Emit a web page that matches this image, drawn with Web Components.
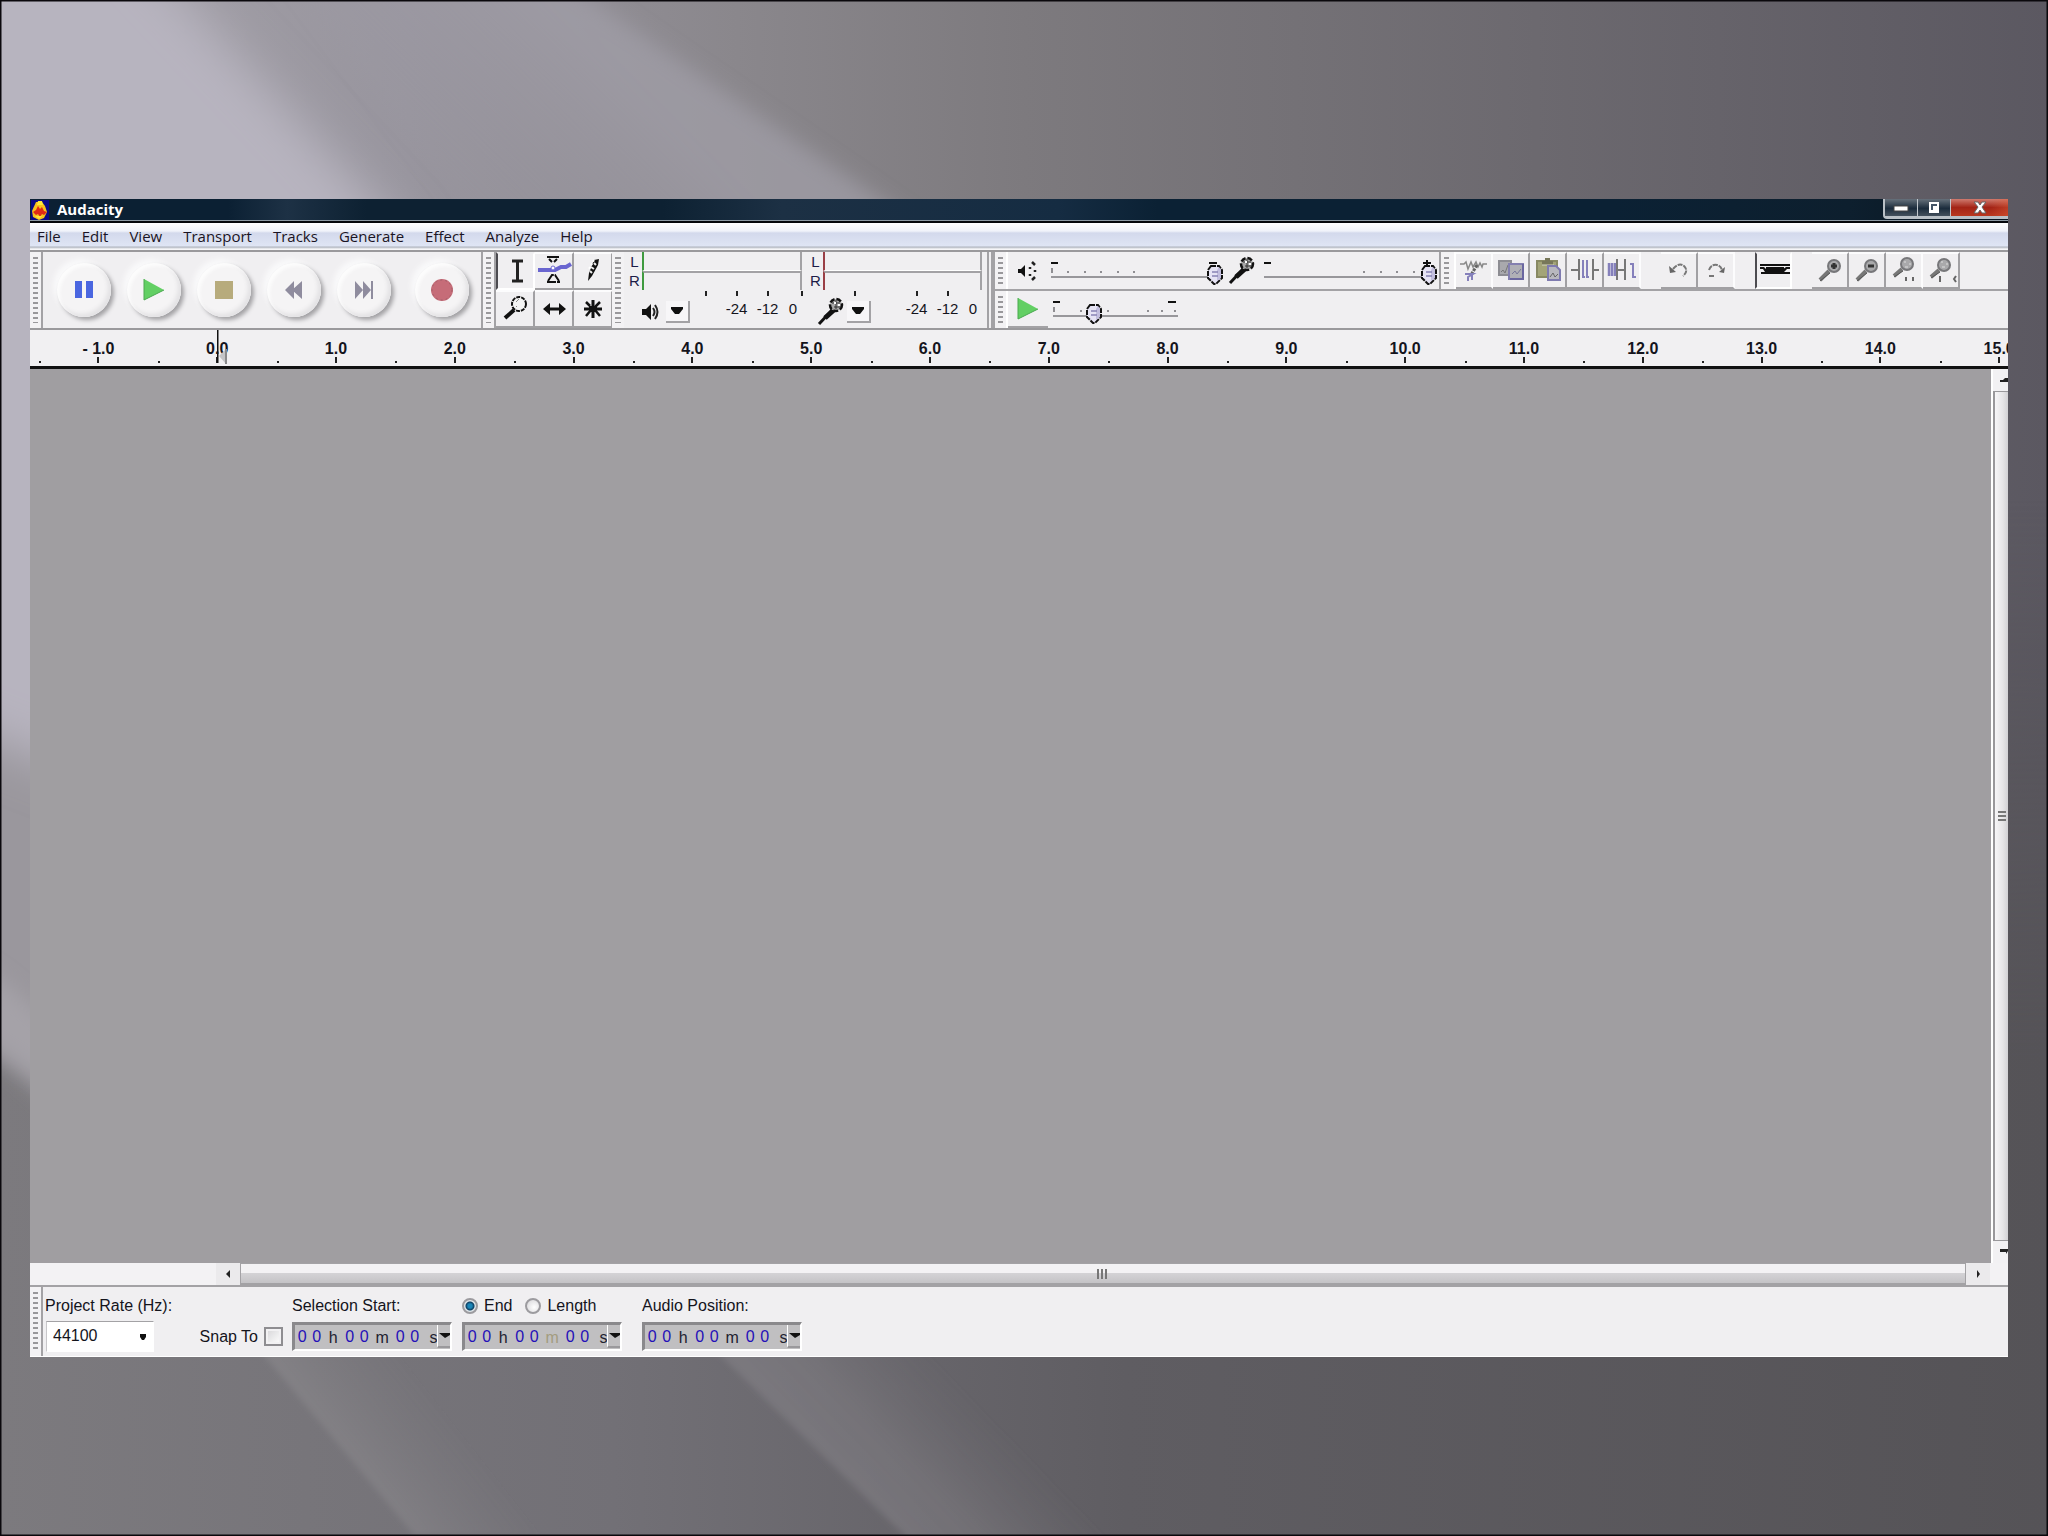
<!DOCTYPE html>
<html lang="en">
<head>
<meta charset="utf-8">
<title>Audacity</title>
<style>
html,body{margin:0;height:100%}
body{font-family:"Liberation Sans",Arial,sans-serif;font-size:16px;color:#14141c;background:#77747a}
</style>
</head>
<body>
<slide-stage>
  <app-window caption="Audacity">
    <menu-bar slot="menu" items="File,Edit,View,Transport,Tracks,Generate,Effect,Analyze,Help"></menu-bar>
    <tool-dock slot="tools"></tool-dock>
    <time-ruler slot="ruler"></time-ruler>
    <track-area></track-area>
    <selection-bar slot="status"></selection-bar>
  </app-window>
</slide-stage>
<script>
const define = (name, css, render) => customElements.define(name, class extends HTMLElement {
  connectedCallback() {
    if (this.shadowRoot) return;
    const root = this.attachShadow({mode: 'open'});
    root.innerHTML = `<style>:host,*{box-sizing:border-box}button{font:inherit;color:inherit;margin:0;padding:0;border:0;background:none}${css}</style>` + render(this);
  }
});

const lens = (cx, cy, hx, hy, inner) => `<path d="M${hx} ${hy}L${cx-5} ${cy+5}" stroke="#777" stroke-width="4"/><path d="M${hx} ${hy+1}L${cx-4} ${cy+7}" stroke="#555" stroke-width="1"/><circle cx="${cx}" cy="${cy}" r="6" fill="#a9a9ab" stroke="#77777a" stroke-width="2"/>${inner}`;
const mic = `<path d="M3 27L16 13" stroke="#111" stroke-width="3"/><path d="M9 21L19 12" stroke="#111" stroke-width="5"/><circle cx="20" cy="8" r="6" fill="#a8a8a8" stroke="#111" stroke-width="2.5" stroke-dasharray="5 2"/><path d="M16 6h8M18 10h7M20 3v9" stroke="#333" stroke-width="1"/><path d="M18 6h2M22 8h2" stroke="#fff" stroke-width="2"/>`;
const icons = {
  logo: [18,20,`<rect width="18" height="20" fill="#0a0a86"/><path d="M5 2h6l3 4 2 6-3 6-5 2-6-3-1-6z" fill="#f7c21c"/><path d="M7 1h4l1 4H6z" fill="#ffe83a"/><path d="M2 12l3-2 2-4 2 3 2-2 2 4 3 1-3 3-2-1-2 3-2-3-2 1z" fill="#e02a16"/><path d="M4 16h7l-3 3z" fill="#ffe83a"/>`],
  pause: [24,20,`<path d="M3 1h7v17H3zM14 1h7v17h-7z" fill="#4a66e0"/>`],
  play: [24,24,`<path d="M2 1L22 12L2 22z" fill="#62cf63"/><path d="M2 1v21L22 12" fill="none" stroke="#4aa94f"/>`],
  stop: [20,20,`<rect x="1" y="1" width="18" height="18" fill="#b7ab7c"/>`],
  rew: [20,20,`<path d="M10 1v18L1 10zM18 1v18L8 10z" fill="#8f8c9e"/>`],
  ffw: [20,20,`<path d="M1 1v18L9 10zM9 1v18L17 10z" fill="#8f8c9e"/><path d="M18 1v18" stroke="#8f8c9e" stroke-width="2"/>`],
  rec: [24,24,`<circle cx="12" cy="12" r="11" fill="#c66c78"/><circle cx="12" cy="12" r="10" fill="none" stroke="#a35f69" stroke-dasharray="2 3"/>`],
  ibeam: [38,38,`<path d="M16 9h11M16 29h11M21.500 9v20" stroke="#222" stroke-width="3"/>`],
  env: [38,38,`<path d="M12 5h12M14 7l3 3M22 7l-3 3" stroke="#111" stroke-width="2" fill="none"/><path d="M3 18h17l6-3h5l5-3" stroke="#6a66d0" stroke-width="4" fill="none"/><circle cx="18" cy="16" r="2" fill="#fff" stroke="#6a66d0"/><path d="M12 30h13M13 29l4-6h3l4 6" stroke="#111" stroke-width="2" fill="none" stroke-dasharray="9 1"/>`],
  pencil: [38,38,`<path d="M20 8l5-1-1 6-6 11-4 5 1-8z" fill="#111"/><path d="M20 11l2 2M17 15l3 2M16 19l2 2" stroke="#eee" stroke-width="2"/><path d="M20 8l-5 9" stroke="#fff" stroke-width="2" stroke-dasharray="2 2"/>`],
  zoom: [38,38,`<path d="M9 28L18 20" stroke="#111" stroke-width="4"/><circle cx="23" cy="14" r="7" fill="#f4f4f4" stroke="#111" stroke-width="2" stroke-dasharray="4 1"/><path d="M20 12l3-3M20 16l1 1" stroke="#888"/>`],
  shift: [38,38,`<path d="M11 19h17" stroke="#111" stroke-width="3"/><path d="M15 13v12l-7-6zM24 13v12l7-6z" fill="#111"/>`],
  multi: [38,38,`<path d="M19 10v18M10 19h5M23 19h5" stroke="#111" stroke-width="3"/><path d="M12 12l4 4M26 12l-5 5M12 26l5-6M26 26l-5-6" stroke="#111" stroke-width="2.500"/><rect x="15" y="16" width="8" height="6" fill="#111"/>`],
  speaker: [22,22,`<path d="M1 8h4l5-5v16l-5-5H1z" fill="#111"/><path d="M12 7q3 4 0 8M14 4q5 7 0 14" fill="none" stroke="#222" stroke-width="2"/>`],
  speaker2: [22,22,`<path d="M1 9h3l4-4v12l-4-4H1z" fill="#111"/><path d="M13 7v2M13 14v2M15 2l3 3M15 20l3-3M18 10v2" stroke="#222" stroke-width="2.500" fill="none"/>`],
  mic: [28,30,mic],
  arrow: [12,8,`<path d="M0 0h12v2L8 7H4L0 2z" fill="#111"/>`],
  cut: [37,38,`<path d="M4 12h4l2-2 2 7 3-7 2 5 3-5 2 5 2-4 2 4 1-3h4" fill="none" stroke="#888" stroke-width="1.500"/><path d="M21 13l-6 10" stroke="#666" stroke-width="3" stroke-dasharray="3 1"/><path d="M9 22h8l-5 3v4M16 23v5" fill="none" stroke="#8580bb" stroke-width="2"/>`],
  copy: [37,38,`<rect x="6" y="9" width="12" height="14" fill="#a9a9ad" stroke="#8d8d93" stroke-width="2"/><path d="M8 20l2-2 2 3 3-8" stroke="#777" fill="none"/><rect x="16" y="12" width="14" height="15" fill="#b0b0b6" stroke="#8480b0" stroke-width="2"/><path d="M19 22l3-3 2 3 4-5" stroke="#77779a" fill="none"/><path d="M30 12v15H17" stroke="#6b67a0" stroke-width="2" fill="none"/>`],
  paste: [37,38,`<rect x="7" y="9" width="20" height="16" fill="#a3a478" stroke="#888963" stroke-width="2"/><path d="M12 9h3V6h5v3h3v4H12z" fill="#77775a"/><path d="M12 13h12" stroke="#d8d8c0"/><path d="M18 14h8l4 4v10H18z" fill="#b8b8be" stroke="#7f7bb0" stroke-width="2"/><path d="M20 25l3-4 2 4 3-3" stroke="#666" fill="none"/>`],
  trim: [37,38,`<path d="M4 18h8M12 7v21M26 7v21M26 18h6" stroke="#777" stroke-width="2"/><path d="M16 8v17h2M20 8v17h2" fill="none" stroke="#8580bb" stroke-width="2"/>`],
  silence: [37,38,`<path d="M5 11v13M8 11v13M11 11v13" stroke="#8580bb" stroke-width="2.500"/><path d="M13 7v21M14 18h8M21 7v21" stroke="#777" stroke-width="2"/><path d="M26 12h3v13h3" fill="none" stroke="#8580bb" stroke-width="2"/>`],
  undo: [37,38,`<path d="M12 17q6-7 11-3q5 5-1 10" fill="none" stroke="#777" stroke-width="2" stroke-dasharray="5 1"/><path d="M8 14l1 7 6-1z" fill="#666"/>`],
  redo: [37,38,`<path d="M11 18q2-6 8-5q4 1 5 5" fill="none" stroke="#777" stroke-width="2" stroke-dasharray="5 1"/><path d="M27 15l-1 6-5-1z" fill="#666"/><path d="M11 24h5" stroke="#777" stroke-width="2"/>`],
  sync: [37,38,`<path d="M5 12h31v2H5z" fill="#111"/><path d="M5 15h4l3 3h15l4-3h5v2h-4l-3 3H10l-2-3H5z" fill="#111"/><path d="M11 15h18v5H11z" fill="#111"/><path d="M6 21h29" stroke="#111" stroke-width="2"/>`],
  zin: [37,38,lens(22,14,8,28,`<path d="M19 14h6M22 11v6" stroke="#333" stroke-width="3"/>`)],
  zout: [37,38,lens(22,14,8,28,`<path d="M19 14h6" stroke="#333" stroke-width="3"/>`)],
  zsel: [37,38,lens(21,12,8,24,`<path d="M18 10h2M23 12h2M19 15h3" stroke="#ddd"/><path d="M20 25v4M27 25v4" stroke="#666" stroke-width="2"/>`)],
  zfit: [37,38,lens(21,13,8,25,`<path d="M18 10h2M23 12h2M19 15h3" stroke="#ddd"/><path d="M17 24v6M33 24l-2 3 2 3" stroke="#666" stroke-width="2" fill="none"/>`)]
};
define('ui-icon', ':host{display:block;flex:none;line-height:0}svg{display:block}', el => {
  const [w, h, body] = icons[el.getAttribute('name')];
  return `<svg width="${w}" height="${h}" viewBox="0 0 ${w} ${h}" fill="none" aria-hidden="true">${body}</svg>`;
});

define('slide-stage', `
:host{display:flex;flex-direction:column;position:relative;min-height:100vh;padding:199px 40px 179px 30px;overflow:hidden}
.bg{position:absolute;inset:0;width:100%;height:100%}
::slotted(*){position:relative;flex:1}`, () => `
<svg class="bg" viewBox="0 0 2048 1536" preserveAspectRatio="none" aria-hidden="true">
  <defs>
    <linearGradient id="base"><stop offset="0" stop-color="#a5a2a9"/><stop offset=".2" stop-color="#98959e"/><stop offset=".36" stop-color="#8a878c"/><stop offset=".5" stop-color="#7d7a7e"/><stop offset=".75" stop-color="#6c696f"/><stop offset="1" stop-color="#5b5861"/></linearGradient>
    <linearGradient id="low"><stop offset="0" stop-color="#7c7a7e"/><stop offset=".3" stop-color="#727076"/><stop offset=".55" stop-color="#5f5d62"/><stop offset="1" stop-color="#555357"/></linearGradient>
    <linearGradient id="fade" x2="0" y2="1"><stop offset="0" stop-color="#fff" stop-opacity="0"/><stop offset=".55" stop-color="#fff"/></linearGradient>
    <mask id="m"><rect y="500" width="2048" height="1036" fill="url(#fade)"/></mask>
    <linearGradient id="s1" gradientUnits="userSpaceOnUse" x1="265" y1="1357" x2="350" y2="1290"><stop offset="0" stop-color="#9a989b" stop-opacity=".35"/><stop offset="1" stop-color="#8a888c" stop-opacity="0"/></linearGradient>
    <linearGradient id="s2" gradientUnits="userSpaceOnUse" x1="720" y1="1357" x2="830" y2="1250"><stop offset="0" stop-color="#8f8c92" stop-opacity=".4"/><stop offset=".4" stop-color="#8a878c" stop-opacity=".35"/><stop offset="1" stop-color="#77747a" stop-opacity="0"/></linearGradient>
    <linearGradient id="s3" gradientUnits="userSpaceOnUse" x1="450" y1="250" x2="620" y2="80"><stop offset="0" stop-color="#9b98a2" stop-opacity="0"/><stop offset="1" stop-color="#a19ea8" stop-opacity=".7"/></linearGradient>
    <filter id="b1"><feGaussianBlur stdDeviation="24"/></filter>
    <filter id="b2"><feGaussianBlur stdDeviation="10"/></filter>
    <filter id="b3"><feGaussianBlur stdDeviation="3"/></filter>
  </defs>
  <rect width="2048" height="1536" fill="url(#base)"/>
  <rect width="2048" height="1536" fill="url(#low)" mask="url(#m)"/>
  <path d="M-60 1020L0 1060L60 1110L400 1300V700H-60z" fill="#9a979d" filter="url(#b2)"/>
  <path d="M-60 940L0 980L60 1030V1090L0 1050L-60 1010z" fill="#a5a2a8" filter="url(#b2)"/>
  <path d="M250-80L475-80L925 230L500 260z" fill="url(#s3)" filter="url(#b2)"/>
  <path d="M-60-80H110L410 240L300 860L-60 720z" fill="#b7b4bf" filter="url(#b1)"/>
  <path d="M257 1347L415 1536H760L560 1340z" fill="url(#s1)" filter="url(#b3)"/>
  <path d="M712 1347L905 1536L920 1560H1220L1000 1340z" fill="url(#s2)" filter="url(#b3)"/>
  <path d="M0 0H2048V1536H0z" fill="none" stroke="#0a080c" stroke-width="3"/>
</svg><slot></slot>`);

define('app-window', `
:host{display:flex;flex-direction:column;background:#f0eff1;overflow:hidden;min-width:0}
header{display:flex;align-items:center;height:24px;padding-left:1px;gap:8px;background:linear-gradient(90deg,#0b2033 0 10%,#1d3145 13%,#0d2132 17% 32%,#1c3044 38%,#152c42 52%,#0b2134 57% 80%,#0d1f2e 92%,#07141f);border-bottom:2px solid #05080c;box-shadow:inset 0 -1px #8d9aa4}
h1{margin:0;flex:1;font:700 15px/20px "Open Sans","Noto Sans",sans-serif;color:#fff;padding-bottom:2px}
.ctl{display:flex;align-self:flex-start;height:20px;border:solid #b9c0c6;border-width:0 0 3px 2px;border-radius:0 0 0 4px}
.ctl button{display:flex;align-items:center;justify-content:center;width:33px;height:17px;background:linear-gradient(#66717b,#1b2c3c 55%,#44515d);border-right:1px solid #c0c6cb}
.ctl .close{width:57px;border:0;background:linear-gradient(90deg,#0000 70%,#e2603a66),linear-gradient(#cf7a6e,#a32416 50%,#b9381f)}
main{flex:1;display:flex;min-height:0}
main ::slotted(*){flex:1}`, el => `
<header><ui-icon name="logo"></ui-icon><h1>${el.getAttribute('caption')}</h1>
<div class="ctl">
<button aria-label="Minimize"><svg width="16" height="8"><rect x="1" y="2" width="14" height="5" fill="#fff" stroke="#444"/></svg></button>
<button aria-label="Restore"><svg width="12" height="13"><rect x="1" y="1" width="10" height="11" fill="#fff"/><path d="M4 9V4h5" fill="none" stroke="#456" stroke-width="2"/></svg></button>
<button class="close" aria-label="Close"><svg width="18" height="14"><path d="M3 1h4l2 3 2-3h4l-4 5 4 6h-4L9 9l-2 3H3l4-6z" fill="#fff" stroke="#666"/></svg></button>
</div></header>
<slot name="menu"></slot><slot name="tools"></slot><slot name="ruler"></slot><main><slot></slot></main><slot name="status"></slot>`);

define('menu-bar', `
:host{display:block;height:29px;background:linear-gradient(#fff,#f0f3fa 8px,#d3d9ec 10px,#dfe5f4 23px,#aeb3bd 24px,#f6f6f8 26px);border-bottom:2px solid #9a999c}
nav{display:flex;gap:21px;padding-left:7px;align-items:center;height:26px}
button{font:15px/20px "Open Sans","Noto Sans",sans-serif;color:#1a1424}`, el => `
<nav aria-label="Menu">${el.getAttribute('items').split(',').map(t => `<button>${t}</button>`).join('')}</nav>`);

define('tool-grip', `
:host{display:flex;flex:none;width:13px;padding:5px 3px;border-right:2px solid #a3a2a5;background:#f3f2f4}
i{flex:1;background:repeating-linear-gradient(#99989b 0 2px,#f3f2f4 2px 5px)}`, () => `<i></i>`);

define('round-button', `
:host{display:flex;flex:none;width:70px;justify-content:center;align-items:center}
button{width:54px;height:54px;border-radius:50%;display:flex;align-items:center;justify-content:center;background:radial-gradient(circle at 50% 50%,#f5f4f5 60%,#eeedef);box-shadow:3px 3px 4px #a2a1a4,-4px -4px 5px #f9f9fa,inset 3px 3px 3px #fcfcfc,inset -3px -3px 4px #e3e2e4}`, el => `
<button aria-label="${el.getAttribute('label')}"><ui-icon name="${el.getAttribute('icon')}"></ui-icon></button>`);

define('tool-button', `
:host{display:block;flex:none}
button{display:block;width:100%;height:100%;border:solid;border-width:2px 2px 2px 0;border-color:#fcfcfd #a1a0a3 #a1a0a3;overflow:hidden}
ui-icon{margin:-2px 0}
:host([pressed]) button{border-color:transparent #fff #fff;border-left:2px solid #4c4b50}
:host([pressed]) ui-icon{margin-left:-2px}
:host([flat]) button{border-right-color:#fcfcfd}`, el => `
<button aria-label="${el.getAttribute('label')}"><ui-icon name="${el.getAttribute('icon')}"></ui-icon></button>`);

define('level-meter', `
:host{display:flex;flex-direction:column;flex:none}
.ch{display:flex;flex:none;height:19px}
.ch b{width:18px;padding-left:3px;text-align:center;font:15px/19px "Liberation Sans",sans-serif;color:#1c1c48}
.bar{flex:1;border-left:2px solid var(--c);border-right:2px solid #a3a2a5;border-bottom:1px solid #fff;margin-right:3px}
.ch+.ch .bar{border-top:2px solid #a3a2a5;border-bottom:0}
.ticks,.nums{display:flex;justify-content:flex-end;margin-right:2px}
.ticks i{width:31px;height:7px;display:flex;justify-content:center;padding:1px 0}
.ticks i.on::after{content:"";width:2px;height:5px;background:#222}
.ticks i:last-child,.nums span:last-child{width:20px}
.ticks i:last-child{justify-content:flex-end}
.row{display:flex;height:29px;align-items:center}
.ic{width:42px;display:flex;justify-content:flex-end;padding-right:3px}
button{width:24px;height:22px;display:flex;align-items:center;justify-content:center;border:solid;border-width:0 2px 2px 0;border-color:#a3a2a5;background:#f7f6f8}
.nums{flex:1;font-size:15px;line-height:20px;padding-bottom:6px;align-self:center}
.nums span{width:31px;text-align:center}`, el => `
<div class="ch"><b>L</b><div class="bar"></div></div><div class="ch"><b>R</b><div class="bar"></div></div>
<div class="ticks">${[...el.getAttribute('ticks')].map(c => `<i class="${c === '1' ? 'on' : ''}"></i>`).join('')}</div>
<div class="row"><div class="ic"><ui-icon name="${el.getAttribute('icon')}"></ui-icon></div><button aria-label="${el.getAttribute('label')} options"><ui-icon name="arrow"></ui-icon></button>
<div class="nums"><span>-24</span><span>-12</span><span>0</span></div></div>`);

define('level-slider', `
:host{display:grid;flex:none;height:37px}
:host>*{grid-area:1/1}
.marks{display:flex;justify-content:space-between;padding:8px 6px 0 0;height:16px}
.marks svg{display:block}
.scale{display:flex;justify-content:space-between;align-self:start;margin:19px 6px 0 0}
.scale i{width:2px;height:2px}.scale i.on{background:#8f8e92}.scale i.first{height:5px;margin-top:-3px}
input{appearance:none;-webkit-appearance:none;margin:0;width:100%;height:37px;background:linear-gradient(#98979b,#98979b) 0 24px/calc(100% - 4px) 2px no-repeat}
input::-webkit-slider-thumb{appearance:none;-webkit-appearance:none;width:16px;height:21px;margin-top:7px;background:url("data:image/svg+xml,%3Csvg xmlns='http://www.w3.org/2000/svg' width='16' height='21'%3E%3Cpath d='M4 2h8l3 4v8l-6 6h-2l-6-6V6z' fill='%23e6e4f4' stroke='%23111' stroke-width='2' stroke-dasharray='5 1'/%3E%3Cpath d='M12 3l2 3v8l-4 3V6z' fill='%23c2bede'/%3E%3Cpath d='M5 8h6M5 12h6' stroke='%238883b4' stroke-width='1.500'/%3E%3C/svg%3E") no-repeat}`, el => `
<div class="marks"><svg width="7" height="8"><path d="M0 3h7" stroke="#111" stroke-width="2"/></svg><svg width="8" height="8"><path d="M0 3h8${el.hasAttribute('plus') ? 'M4 0v8' : ''}" stroke="#111" stroke-width="2"/></svg></div>
<div class="scale">${[...el.getAttribute('ticks')].map((c, n) => `<i class="${c === '1' ? 'on' : ''} ${n ? '' : 'first'}"></i>`).join('')}</div>
<input type="range" aria-label="${el.getAttribute('label')}" min="0" max="100" value="${el.getAttribute('value')}">`);

const tb = (icon, label, extra = '') => `<tool-button icon="${icon}" label="${label}" ${extra}></tool-button>`;
define('tool-dock', `
:host{display:flex;height:78px;border-bottom:2px solid #9a999c}
section{display:flex;flex:none}
.transport{width:453px;border-right:2px solid #a3a2a5}
.transport .keys{display:flex;padding-left:6px}
.transport round-button:last-child{margin-left:8px}
.tools{width:129px}
.tools .grid{display:grid;grid-template-columns:repeat(3,39px);grid-template-rows:38px 38px}
.meters{width:381px;border-right:6px double #a3a2a5}
.meters tool-grip{border:0;width:12px}
.right{flex:1;min-width:0;display:flex;flex-direction:column;border-left:2px solid #a3a2a5}
.line{display:flex;height:39px}
.line+.line{height:37px}
.top{border-bottom:2px solid #a3a2a5}
.mixer{width:446px;border-right:2px solid #a3a2a5;align-items:center}
.mixer tool-grip,.edit tool-grip,.speed tool-grip{align-self:stretch;border-right-color:#fff}
.edit tool-grip{width:15px;padding-right:5px}
.edit tool-button{width:37px;height:37px}
.gap{width:20px}
.speed{align-items:center}
.playbox{width:40px;height:37px;display:flex;align-items:center;justify-content:center;border-bottom:2px solid #a3a2a5}`, () => `
<section class="transport" aria-label="Transport"><tool-grip></tool-grip><div class="keys">
${[['pause','Pause'],['play','Play'],['stop','Stop'],['rew','Skip to Start'],['ffw','Skip to End'],['rec','Record']].map(([i, l]) => `<round-button icon="${i}" label="${l}"></round-button>`).join('')}</div></section>
<section class="tools" aria-label="Tools"><tool-grip></tool-grip><div class="grid">${tb('ibeam','Selection Tool','pressed')}${tb('env','Envelope Tool')}${tb('pencil','Draw Tool')}${tb('zoom','Zoom Tool')}${tb('shift','Time Shift Tool')}${tb('multi','Multi-Tool')}</div></section>
<section class="meters" aria-label="Meters"><tool-grip></tool-grip>
<level-meter style="width:181px;--c:#3f9a3f" icon="speaker" label="Output" ticks="1111"></level-meter><level-meter style="width:180px;--c:#9a3f46" icon="mic" label="Input" ticks="10110"></level-meter></section>
<div class="right"><div class="line top">
<section class="mixer"><tool-grip></tool-grip><ui-icon name="speaker2" style="margin-left:9px"></ui-icon><level-slider style="width:172px;margin-left:12px" label="Output Volume" value="100" ticks="11111100000"></level-slider><ui-icon name="mic" style="margin-left:4px"></ui-icon><level-slider plus style="width:173px;margin-left:9px" label="Input Volume" value="100" ticks="00000011110"></level-slider></section>
<section class="edit"><tool-grip></tool-grip>${tb('cut','Cut','flat')}${tb('copy','Copy')}${tb('paste','Paste')}${tb('trim','Trim')}${tb('silence','Silence','flat')}<div class="gap"></div>${tb('undo','Undo')}${tb('redo','Redo','flat')}<div class="gap"></div>${tb('sync','Sync-Lock','pressed')}<div class="gap"></div>${tb('zin','Zoom In')}${tb('zout','Zoom Out')}${tb('zsel','Fit Selection','flat')}${tb('zfit','Fit Project')}</section>
</div><div class="line"><section class="speed"><tool-grip></tool-grip><button class="playbox" aria-label="Play at Speed"><ui-icon name="play"></ui-icon></button><level-slider style="width:129px;margin-left:5px" label="Playback Speed" value="29" ticks="1010100111"></level-slider></section></div></div>`);

define('time-ruler', `
:host{display:flex;height:39px;padding-left:9px;border-bottom:3px solid #111;overflow:hidden;background:#f1f0f2}
.cell{flex:0 0 6.034%;display:grid;grid-template-rows:1fr 6px 3px;justify-items:center;align-items:end}
.cell>*{grid-column:1}
.cell span{font:700 16px/17px "Liberation Sans",sans-serif;white-space:pre}
.cell i{grid-row:2;width:2px;height:6px;background:#222}
.cell u{grid-row:2;justify-self:start;width:2px;height:2px;background:#222}
.zero{position:relative}
.zero svg{position:absolute;left:50%;top:0}`, () =>
  Array.from({length: 17}, (_, n) => n - 1).map(v => `<div class="cell ${v ? '' : 'zero'}"><span>${v < 0 ? '- 1.0' : v + '.0'}</span><i></i><u></u>${v ? '' : '<svg width="12" height="36"><path d="M0 0v33" stroke="#111" stroke-width="3"/><path d="M9 19v15l-7-8z" fill="#c4c4c6"/><path d="M9 19v15" stroke="#8a8a8c" stroke-width="2"/></svg>'}</div>`).join(''));

define('track-area', `
:host{display:grid;grid-template-columns:1fr 17px;grid-template-rows:1fr 24px;min-height:0}
.canvas{background:#a09ea1}
.v{display:flex;flex-direction:column;border-left:2px solid #fff;background:#f2f1f3;overflow:hidden}
.v button{height:22px;padding-left:7px}
.v .thumb{flex:1;border:1px solid #99989b;border-width:1px 0 1px 2px;background:linear-gradient(90deg,#f7f6f8,#e6e5e7 60%,#d2d1d4);display:flex;align-items:center;padding-left:3px}
.h{grid-column:1/3;display:flex;background:#f3f2f4;border-bottom:2px solid #a3a2a5}
.h .pad{width:186px}
.h button{width:24px;display:flex;align-items:center;justify-content:center;background:#ebeaec}
.h .thumb{flex:1;border:solid #a3a2a5;border-width:1px 1px 2px;background:linear-gradient(#f3f2f4 0 45%,#d3d2d5 50%,#c4c3c6);display:flex;align-items:center;justify-content:center}
.h .corner{width:18px}
svg{display:block}`, () => `
<div class="canvas"></div>
<div class="v"><button aria-label="Scroll up"><svg width="8" height="6"><path d="M0 5V3h3l2-2h3v4z" fill="#222"/></svg></button><div class="thumb"><svg width="8" height="11"><path d="M0 1h8M0 5h8M0 9h8" stroke="#777" stroke-width="2"/></svg></div><button aria-label="Scroll down"><svg width="8" height="6"><path d="M0 0h8v2l-2 3V3H0z" fill="#222"/></svg></button></div>
<div class="h"><div class="pad"></div><button aria-label="Scroll left"><svg width="5" height="8"><path d="M4 0v8L0 4z" fill="#222"/></svg></button><div class="thumb"><svg width="12" height="10"><path d="M1 0v10M5 0v10M9 0v10" stroke="#777" stroke-width="2"/></svg></div><button aria-label="Scroll right"><svg width="5" height="8"><path d="M1 0v8l3-4z" fill="#222"/></svg></button><div class="corner"></div></div>`);

define('time-box', `
:host{display:flex;width:160px;height:29px;border:solid;border-width:3px 2px 2px 3px;border-color:#8a898c #fff #fff #8a898c;background:#c0bfc1}
span{width:15px;text-align:center;line-height:23px;color:#2410b8}
span.u{color:#222230;padding-top:1px;width:19px}span.m{width:22px}span.dim{color:#a39c80}span.s{width:16px;text-align:right}
button{width:13px;border-bottom:2px solid #9a999c;border-left:1px solid #fff;height:23px;display:flex;align-items:center;justify-content:center}
svg{display:block}`, el => `
<span>0</span><span>0</span><span class="u">h</span><span>0</span><span>0</span><span class="u m ${el.hasAttribute('dim') ? 'dim' : ''}">m</span><span>0</span><span>0</span><span class="u s">s</span><button aria-label="${el.getAttribute('label')} format"><svg width="11" height="6"><path d="M0 0h11v2L6 5z" fill="#111"/></svg></button>`);

define('selection-bar', `
:host{display:flex;height:70px;border-bottom:1px solid #fff}
select{appearance:none;-webkit-appearance:none;width:108px;height:31px;border:1px solid #fff;border-top-color:#a3a2a5;border-left-color:#c8c7ca;background:#fff;font:16px "Liberation Sans",sans-serif;color:#14141c;padding:0 0 3px 6px;margin:0}
.sel{display:grid;width:108px;margin-left:1px}
.sel>*{grid-area:1/1}
.sel svg{align-self:center;justify-self:end;margin-right:6px;pointer-events:none}
.body{display:grid;grid-template-columns:155px 92px 170px 180px auto;grid-template-rows:30px 31px;padding:4px 0 0 2px}
.body>*{align-self:center}
.snap{grid-column:2;display:flex;align-items:center;gap:6px;line-height:20px;justify-content:flex-end;padding-right:9px;white-space:nowrap;margin-left:-4px}
input{appearance:none;-webkit-appearance:none;margin:0;flex:none}
input[type=checkbox]{width:19px;height:19px;border:2px solid #8e8d91;background:linear-gradient(135deg,#d5d4d7,#fff);box-shadow:inset 0 0 0 2px #f2f1f3}
input[type=radio]{width:16px;height:16px;border-radius:50%;border:2px solid #9c9b9f;background:radial-gradient(circle at 60% 60%,#fff,#d5d4d7)}
input[type=radio]:checked{background:radial-gradient(circle,#1a86b8 0 2px,#0c3d60 4px,#dfe6ea 5px)}
.opts{display:flex;align-items:center;gap:6px}
.opts label{margin-right:7px}
.t{white-space:nowrap}`, () => `
<tool-grip></tool-grip>
<div class="body">
<label class="t" for="rate">Project Rate (Hz):</label><span></span><span class="t">Selection Start:</span>
<div class="opts"><input type="radio" name="e" id="end" checked><label for="end">End</label><input type="radio" name="e" id="len"><label for="len">Length</label></div><span class="t">Audio Position:</span>
<div class="sel"><select id="rate"><option>44100</option></select><svg width="8" height="8"><path d="M0 1h6v3L4 7H2L0 4z" fill="#111"/></svg></div>
<div class="snap"><label for="snap">Snap To</label><input type="checkbox" id="snap"></div>
<time-box label="Selection start"></time-box><time-box dim label="Selection end"></time-box><time-box label="Audio position"></time-box>
</div>`);
</script>
</body>
</html>
